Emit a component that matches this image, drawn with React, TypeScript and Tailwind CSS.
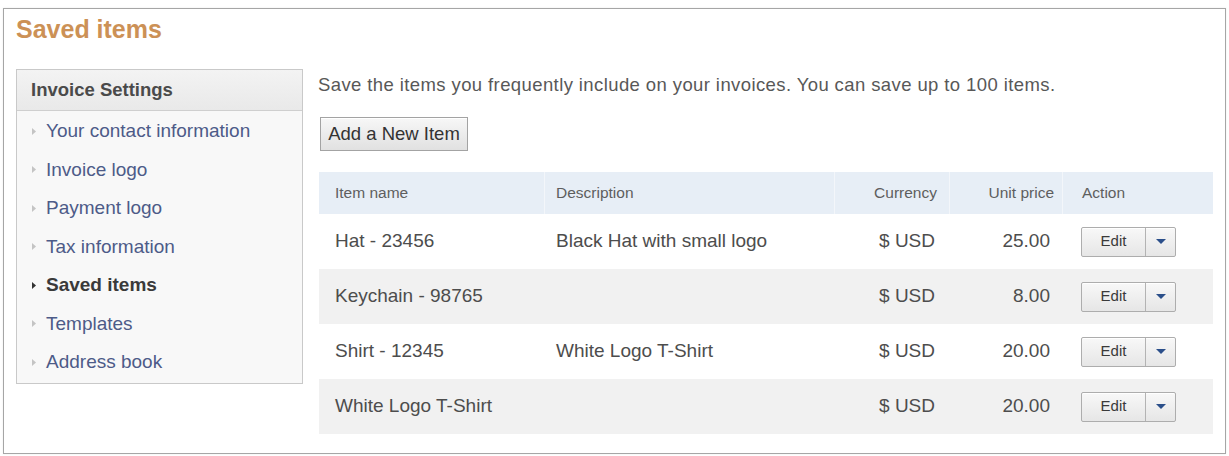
import React from 'react';

const navItems = [
    'Your contact information',
    'Invoice logo',
    'Payment logo',
    'Tax information',
    'Saved items',
    'Templates',
    'Address book',
];

const rows = [
    { name: 'Hat - 23456', desc: 'Black Hat with small logo', currency: '$ USD', price: '25.00' },
    { name: 'Keychain - 98765', desc: '', currency: '$ USD', price: '8.00' },
    { name: 'Shirt - 12345', desc: 'White Logo T-Shirt', currency: '$ USD', price: '20.00' },
    { name: 'White Logo T-Shirt', desc: '', currency: '$ USD', price: '20.00' },
];

function NavArrow({ active }: { active: boolean }) {
    return (
        <svg width="4" height="7" viewBox="0 0 4 7" className="shrink-0">
            <path d="M0 0 L4 3.5 L0 7 Z" fill={active ? '#333333' : '#c4c4c4'} />
        </svg>
    );
}

function EditButton() {
    return (
        <div className="flex h-[30px] w-[95px] border border-[#adadad] rounded-[2px] bg-gradient-to-b from-[#f8f8f8] to-[#e6e6e6] shadow-[inset_0_1px_0_#ffffff]">
            <div className="w-[64px] flex items-center justify-center border-r border-[#b3b3b3] text-[15px] text-[#3a3a3a]">
                Edit
            </div>
            <div className="flex-1 flex items-center justify-center">
                <svg width="10" height="5" viewBox="0 0 10 5">
                    <path d="M0 0 H10 L5 5 Z" fill="#2b4f8a" />
                </svg>
            </div>
        </div>
    );
}

export default function App() {
    return (
        <div className="w-[1229px] h-[456px] bg-white pt-[8px] pl-[3px] font-['Liberation_Sans',Arial,sans-serif]">
            <div className="w-[1223px] h-[446px] border border-[#a6a6a6] pl-[12px] pt-[6px] shadow-[0_0_2px_rgba(0,0,0,0.08)]">
                {/* Page title */}
                <h1 className="text-[25px] leading-[29px] font-bold text-[#cc9156]">Saved items</h1>

                <div className="mt-[25px] flex gap-[15px]">
                    {/* Sidebar */}
                    <div className="w-[287px] border border-[#c9c9c9] bg-[#f8f8f8] self-start">
                        <div className="h-[41px] flex items-center pl-[14px] bg-gradient-to-b from-[#f3f3f3] to-[#e9e9e9] border-b border-[#cfcfcf] text-[18.5px] font-bold text-[#4a4a4a]">
                            Invoice Settings
                        </div>
                        <ul className="py-[1px]">
                            {navItems.map((item) => {
                                const active = item === 'Saved items';
                                return (
                                    <li key={item} className="h-[38.5px] flex items-center gap-[10px] pl-[15px]">
                                        <NavArrow active={active} />
                                        <span className={`text-[19px] ${active ? 'font-bold text-[#3a3a3a] text-[18.5px]' : 'text-[#4d5b88]'}`}>
                                            {item}
                                        </span>
                                    </li>
                                );
                            })}
                        </ul>
                    </div>

                    {/* Main content */}
                    <div className="w-[895px]">
                        <p className="mt-[4px] text-[18.5px] leading-[24px] tracking-[0.4px] text-[#585858]">
                            Save the items you frequently include on your invoices. You can save up to 100 items.
                        </p>

                        <button className="mt-[20px] h-[34px] w-[148px] ml-[2px] border border-[#a3a3a3] bg-gradient-to-b from-[#f7f7f7] to-[#e1e1e1] text-[18.5px] text-[#333] shadow-[inset_0_1px_0_#ffffff]">
                            Add a New Item
                        </button>

                        {/* Items table */}
                        <div className="mt-[21px] ml-[1px] w-[894px]">
                            <div className="grid grid-cols-[226px_290px_115px_113px_1fr] h-[42px] bg-[#e7eef6] text-[15.5px] text-[#5e5e5e]">
                                <div className="flex items-center pl-[16px] border-r border-[#f3f6fa]">Item name</div>
                                <div className="flex items-center pl-[11px] border-r border-[#f3f6fa]">Description</div>
                                <div className="flex items-center justify-end pr-[12px] border-r border-[#f3f6fa]">Currency</div>
                                <div className="flex items-center justify-end pr-[8px] border-r border-[#f3f6fa]">Unit price</div>
                                <div className="flex items-center pl-[19px]">Action</div>
                            </div>
                            {rows.map((row, i) => (
                                <div
                                    key={i}
                                    className={`grid grid-cols-[226px_290px_115px_113px_1fr] h-[55px] text-[19px] text-[#4d4d4d] ${i % 2 === 1 ? 'bg-[#f1f1f1]' : 'bg-white'}`}
                                >
                                    <div className="flex items-center pl-[16px]">{row.name}</div>
                                    <div className="flex items-center pl-[11px]">{row.desc}</div>
                                    <div className="flex items-center justify-end pr-[15px]">{row.currency}</div>
                                    <div className="flex items-center justify-end pr-[13px]">{row.price}</div>
                                    <div className="flex items-center pl-[18px]">
                                        <EditButton />
                                    </div>
                                </div>
                            ))}
                        </div>
                    </div>
                </div>
            </div>
        </div>
    );
}
